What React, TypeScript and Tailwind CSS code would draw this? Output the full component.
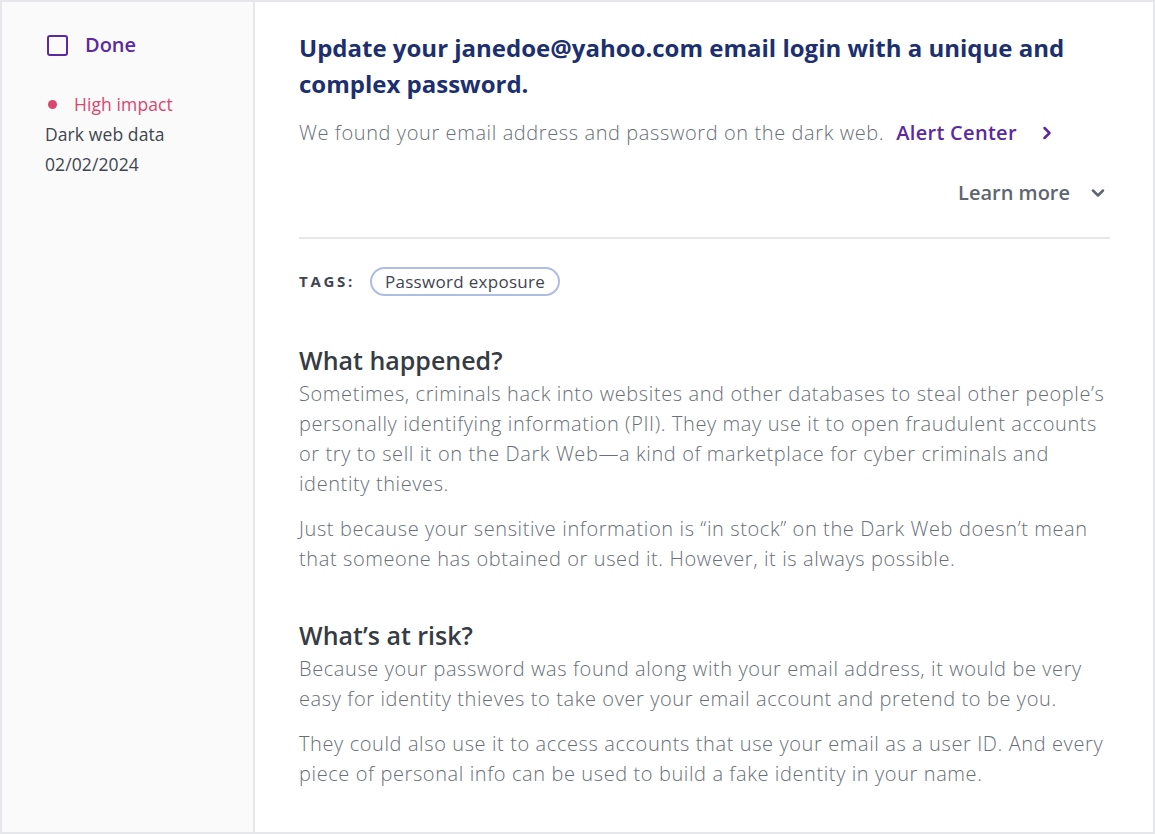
import { FiChevronRight, FiChevronDown } from "react-icons/fi";

const font = { fontFamily: "'Open Sans', Lato, sans-serif" };

function Sidebar() {
  return (
    <div className="w-[253px] shrink-0 bg-[#fafafa] border-r-2 border-[#e5e7eb] pl-[43px] pt-[28px]">
      <div className="flex items-center gap-[17px] pl-[2px]">
        <span className="w-[21px] h-[21px] border-[2.5px] border-[#5b2a9e] rounded-[3px]" />
        <span className="text-[20px] font-semibold text-[#5b2a9e]">Done</span>
      </div>
      <div className="mt-[29px] text-[17.5px] leading-[30px] tracking-[0.1px]">
        <div className="flex items-center gap-[17px] text-[#d9466f]">
          <span className="w-[9px] h-[9px] rounded-full bg-[#d9466f] ml-[3px]" />
          <span>High impact</span>
        </div>
        <div className="text-[#3f4550]">Dark web data</div>
        <div className="text-[#3f4550]">02/02/2024</div>
      </div>
    </div>
  );
}

function Section({ title, paras }: { title: string; paras: string[] }) {
  return (
    <div>
      <h2 className="text-[25px] font-semibold text-[#363b44] leading-[32px] mb-[3px]">{title}</h2>
      {paras.map((p, i) => (
        <p key={i} className={`text-[20px] leading-[30px] font-light tracking-[0.6px] text-[#6a6f77] ${i > 0 ? "mt-[15px]" : ""}`}>
          {p}
        </p>
      ))}
    </div>
  );
}

export default function App() {
  return (
    <div style={font} className="w-[1155px] h-[834px] flex border-2 border-[#e5e7eb] bg-white overflow-hidden">
      <Sidebar />
      <div className="flex-1 pl-[44px] pr-[43px] pt-[28px]">
        <h1 className="text-[24px] font-bold leading-[36px] text-[#1c2f6f]">
          Update your janedoe@yahoo.com email login with a unique and complex password.
        </h1>
        <div className="mt-[16px] flex items-center text-[20px] font-light tracking-[0.6px] text-[#6a6f77]">
          <span>We found your email address and password on the dark web.</span>
          <span className="ml-[12px] font-semibold tracking-[0.3px] text-[#5b2a9e]">Alert Center</span>
          <FiChevronRight className="ml-[20px] text-[#5b2a9e]" size={20} strokeWidth={3} />
        </div>
        <div className="mt-[30px] flex items-center justify-end pr-[2px] text-[20px] font-semibold text-[#5f6570]">
          <span>Learn more</span>
          <FiChevronDown className="ml-[18px]" size={20} strokeWidth={3} />
        </div>
        <div className="mt-[29px] border-t-2 border-[#e5e7eb]" />
        <div className="mt-[28px] flex items-center gap-[15px]">
          <span className="text-[15px] font-bold tracking-[0.18em] text-[#3f4550]">TAGS:</span>
          <span className="px-[13px] h-[29px] flex items-center rounded-full border-2 border-[#aebde6] text-[17px] tracking-[0.3px] text-[#3f4550]">
            Password exposure
          </span>
        </div>
        <div className="mt-[48px]">
          <Section
            title="What happened?"
            paras={[
              "Sometimes, criminals hack into websites and other databases to steal other people’s personally identifying information (PII). They may use it to open fraudulent accounts or try to sell it on the Dark Web—a kind of marketplace for cyber criminals and identity thieves.",
              "Just because your sensitive information is “in stock” on the Dark Web doesn’t mean that someone has obtained or used it. However, it is always possible.",
            ]}
          />
        </div>
        <div className="mt-[45px]">
          <Section
            title="What’s at risk?"
            paras={[
              "Because your password was found along with your email address, it would be very easy for identity thieves to take over your email account and pretend to be you.",
              "They could also use it to access accounts that use your email as a user ID. And every piece of personal info can be used to build a fake identity in your name.",
            ]}
          />
        </div>
      </div>
    </div>
  );
}
